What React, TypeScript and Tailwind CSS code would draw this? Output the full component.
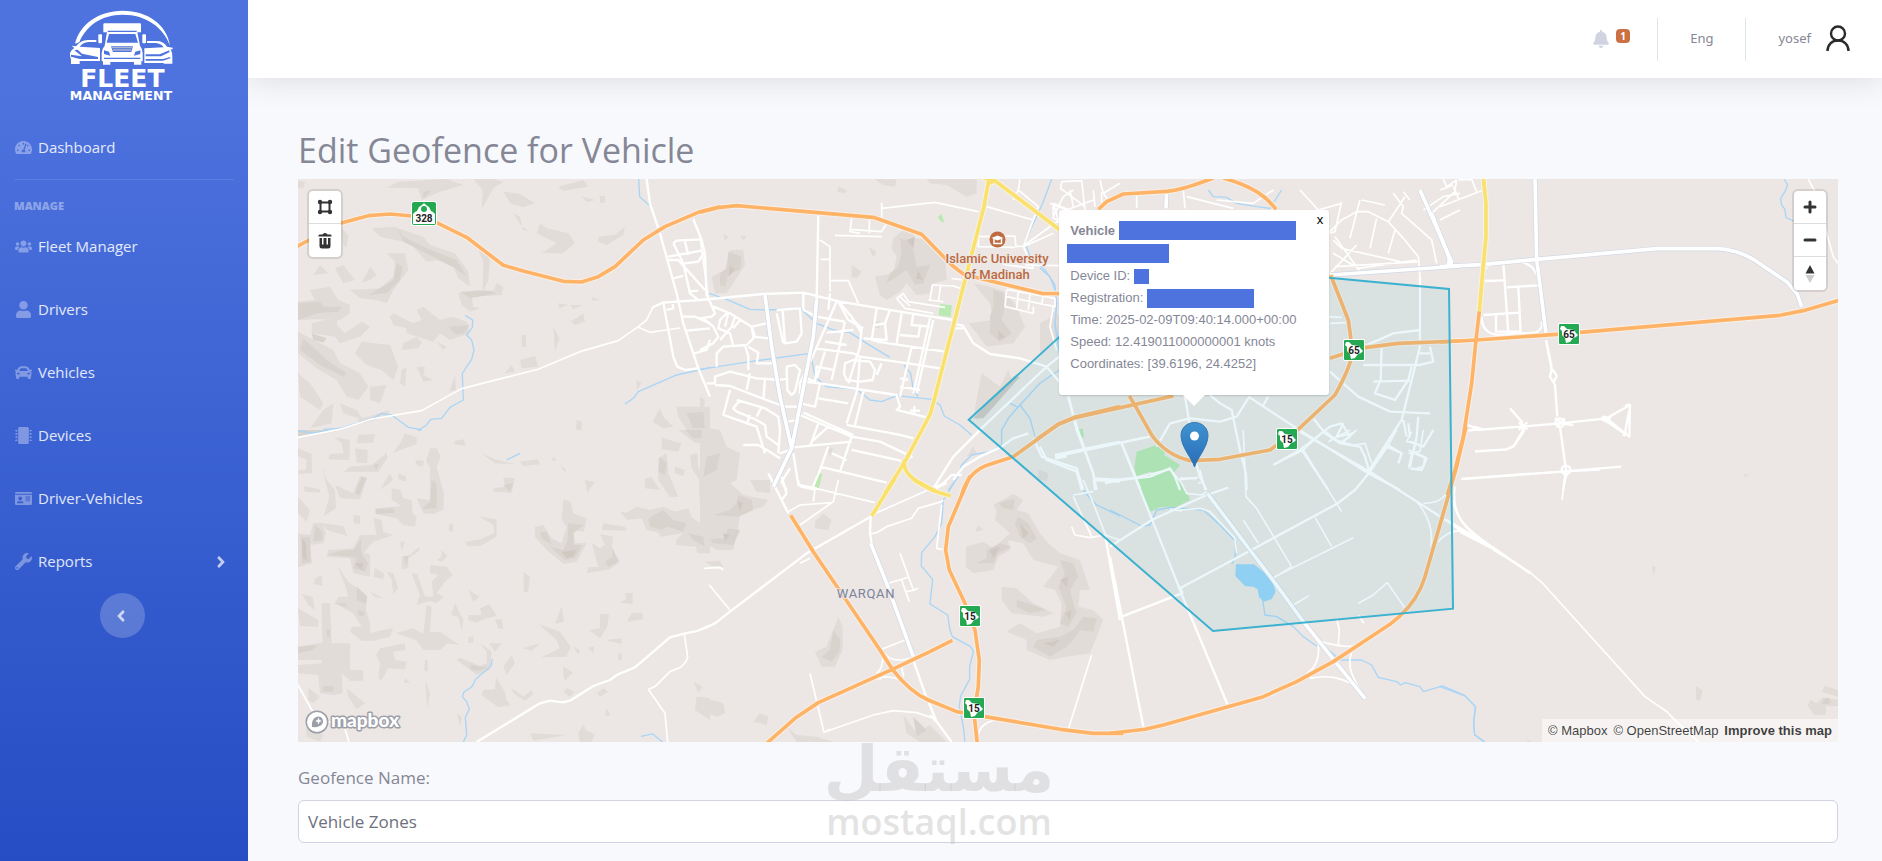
import React from "react";
import {
  FaTachometerAlt,
  FaUsers,
  FaUser,
  FaCar,
  FaMicrochip,
  FaIdCard,
  FaWrench,
  FaAngleRight,
  FaAngleLeft,
  FaBell,
} from "react-icons/fa";

type Tile = {
  x: number;
  y: number;
  hill?: string;
  hillMid?: string;
  hillDark?: string;
  park?: string;
  lake?: string;
  stream?: string;
  thin?: string;
  mid?: string;
  wide?: string;
  orange?: string;
  yellow?: string;
};

// Vector map data. Each tile has its own origin and is drawn at a third of its units.
const tiles: Tile[] = [
  {
    x: 290,
    y: 120,
    hill:
      "M24 182L45 185L40 205L24 205Z M325 185L470 177L520 195L450 215L395 240L385 205L290 203Z M550 178L610 177L640 185L610 205L575 268L578 210Z M640 215L690 222L735 250L700 262L660 250Z M668 278L690 290L700 330L715 333L695 318Z M750 310L770 325L835 340L855 368L820 400L755 400L800 370L740 340Z M805 200L880 180L895 200L820 212Z M875 228L915 240L890 247Z M930 228h15v20h-15Z M1005 320L1000 345L950 375L925 365L925 350L975 345Z M245 325L310 320L400 350L420 375L495 400L535 455L540 500L505 475L490 440L440 420L410 425L360 370L270 350Z M555 365L590 390L600 420L595 480L578 520L580 425Z M155 325L175 345L170 380L160 375Z M290 400L345 400L355 450L310 510L290 550L260 540L210 535L180 510L270 505L310 470L315 425Z M90 435L115 460L70 465Z M135 445L160 435L195 480L160 490Z M240 440L260 465L240 480L215 488Z M60 510L120 500L145 540L180 555L180 580L150 600L80 598L24 600L24 545L75 540Z M505 520L560 510L610 512L620 490L640 500L635 525L545 530L550 560L570 565L540 575L515 555Z M300 590L310 580L370 610L395 600L380 570L400 560L450 600L490 590L530 605L540 640L480 660L450 640L430 665L350 640L350 625L310 615Z M65 610L145 590L140 615L165 640L215 605L240 620L210 650L150 670L135 650L65 640Z M24 635L130 690L150 730L210 760L235 800L205 840L170 830L140 780L80 745L24 700Z M215 665L300 675L325 740L310 780L275 750L230 735L195 700Z M380 650L395 665L385 685L335 690L340 670Z M440 665L470 680L460 690Z M24 760L60 790L100 850L90 870L30 830Z M150 850L200 870L220 900L160 880Z M240 800L290 795L270 850L240 840Z M335 750L350 740L345 800L330 790Z M380 740L405 740L400 765L430 780L400 785Z M495 765L498 810L478 815Z M695 645h13v35h-13Z M790 620L808 655L795 695Z M805 550L835 555L808 565Z M840 555L880 555L850 568Z M905 530L930 540L908 543Z M880 580L885 605L855 615L842 605Z M735 708L745 740L695 745L690 720Z M665 735L675 755L645 760Z M1040 780L1055 790L1040 810Z M860 900L875 905V930H858Z M1160 860L1260 860V930H1190L1165 890Z M1110 865L1120 890L1150 920L1120 925L1088 905Z M100 870L130 850L125 910L60 925Z M200 900L300 870L290 890L220 910Z",
    hillMid:
      "M24 550L90 545L100 560L155 560L145 575L80 580L24 600Z M320 320L340 350L410 385L500 420L530 470L495 445L400 395L340 365Z M320 430L338 440L330 480L290 520L235 525L310 480Z M510 515L600 512L620 520L540 535Z M475 620L540 615L520 640L500 645Z M65 640L110 655L100 668L70 660Z M40 655L110 720L170 760L160 770L90 735L30 690Z M400 215L425 210L400 235Z M1190 880L1240 875L1245 925H1210Z",
    stream:
      "M1046 177L1049 230L1077 255M526 586L548 600L547 622L530 645L545 660L552 690L545 718L517 760L520 840L480 862L455 895L422 898L410 915L390 928L355 922L305 885L275 880L255 892L200 910L150 925L100 928M1005 852L1030 835L1045 815L1160 765L1260 743M690 1000L650 1020",
    thin:
      "M150 928L245 897L395 872L515 806L745 748L870 695L985 662L1045 620L1070 600L1090 560L1115 548L1170 545 M1045 622L1080 637L1170 624 M1085 565L1120 548",
    mid:
      "M1070 177L1080 250L1110 340L1160 520L1180 610L1225 745L1260 830 M1120 548L1150 710L1162 740L1185 750L1225 745 M1115 548L1260 538 M1135 410L1235 392 M1150 370L1160 362L1230 358 M1150 370L1180 430L1200 520L1225 540 M1210 297L1235 360L1245 400L1250 530 M1135 420L1165 420L1245 510 M1150 475L1180 468 M1185 365L1195 405 M1130 570L1150 565L1148 552 M1178 590L1215 590L1260 610 M1190 632L1260 625 M1213 700L1250 690L1260 660 M1185 430L1225 425L1245 395 M1195 515L1225 512",
    orange:
      "M0 390L24 378L156 308L235 287L300 282L365 288L440 308L530 352L640 436L700 453L820 484L875 486L925 470L975 440L1060 360L1125 320L1230 275L1290 260",
  },
  {
    x: 700,
    y: 170,
    hill:
      "M525 28L590 28L585 50L550 45Z M415 50L440 60L435 70L412 65Z M680 28L830 28L830 70L800 80L740 45L690 40Z M70 192L85 200L75 212Z M120 195L140 200L130 212Z M90 240L130 240L135 285L100 340L80 370L45 370L35 320L75 300Z M580 205L620 170L645 180L640 205L695 210L735 260L740 330L700 340L690 370L650 375L620 340L600 365L560 390L540 375L525 320L580 310L590 260L575 235Z M505 230L530 245L520 262Z M455 285L485 305L470 325L455 320Z M515 455L540 455L538 475L522 472Z M820 340L870 350L915 365L950 410L975 470L940 520L860 530L830 490L805 460L880 450L870 400Z M1055 420L1078 440L1078 500L1040 540L1040 490Z M845 610L900 650L925 600L940 640L820 740Z M0 770L60 780L80 830L120 850L110 930L50 960H0Z M0 680L15 690L10 730L0 730Z M380 830L400 835L390 860Z M820 830L830 850L800 860Z M1015 900L1045 910L1040 935L1015 925Z",
    hillMid:
      "M85 245L125 260L120 300L85 310L75 350L60 345L60 310L80 295Z M600 205L630 215L640 240L650 290L690 285L670 340L645 345L620 300L590 320L560 340L570 310L595 290L605 250Z M880 360L910 370L915 410L905 450L935 490L900 515L870 490L870 440L880 410Z M845 710L940 620L960 610L870 720L830 750Z M20 860L60 850L50 900L10 920Z",
    hillDark: "M620 210L645 200L640 235Z M655 300L668 330L648 325Z M90 285L105 300L85 320Z M895 480L915 500L895 510Z M920 640L945 620L960 620L850 745L820 745Z",
    park: "M714 140L725 132L733 158L720 152Z M720 402L756 406L752 441L716 436Z M350 908L367 912L356 955L343 950Z M1135 780L1148 778L1152 800L1138 804Z",
    stream:
      "M27 370L80 388L150 418L200 420L300 415L350 460L400 480L450 488L500 520L570 562M0 598L150 575L330 550 M332 552L345 620L380 650L470 658L510 690L545 695L590 677L695 688L720 705L733 738L780 765L815 795 M612 585L632 610L640 660L655 680 M1055 28L1030 95L975 215L990 260L1035 300L1065 345L1070 400L1065 470L1078 550 M1078 600L1020 640L960 705L925 745L905 780L905 825L870 845L815 855L785 885L775 920L745 960 M960 705L990 745L1005 800 M930 700L955 712",
    thin:
      "M545 98L545 145 M545 115L705 97L835 125 M405 196L545 200 M455 145L450 185L480 190 M508 145L508 190 M560 160L545 185L450 178 M860 110L1000 150 M360 210L390 230L390 365 M362 268L390 268 M392 332L445 332L475 400 M0 200L25 385 M590 385L610 370L625 395L735 412 M590 385L615 415L700 430 M600 380L630 408 M690 390L697 345L760 348L780 355 M685 390L730 395 M722 348L715 395 M755 325L790 330 M835 200L945 198L948 230L970 228 M835 190L835 230L945 232 M970 230L1000 295L920 285L880 270 M970 228L1078 150 M865 25L1078 20 M960 28L955 60L1015 110 M955 60L940 90 M1015 110L970 230L1060 190 M1085 35L1082 55L1155 110 M1060 100L1078 160 M1060 100L1130 130 M1145 30L1155 120 M1085 35L1145 32 M1200 30L1210 70L1260 40 M1210 70L1225 90 M975 285L1078 287 M920 360L915 410L1000 430L1000 410 M920 380L1065 410L1065 385L920 358 M955 365L950 415 M990 370L985 420 M1030 375L1025 405 M1060 410L1050 470L1070 540",
    mid:
      "M760 460L790 468L820 520L870 552L960 565L1040 590L1078 635 M700 955L760 860L850 770L1040 590L1078 560 M765 475L790 475 M0 390L190 372L310 368L420 395L600 425L760 450 M355 130L350 390 M390 370L385 420 M25 385L45 430L35 440L0 445 M0 540L40 520L55 500L40 470L10 445 M40 410L90 430L155 470L200 460 M155 470L165 500L140 525L70 530L50 550L50 590 M80 430L60 450L55 475L90 490L100 530 M105 440L95 470L60 510 M120 450L100 475 M85 430L75 470 M155 470L160 500L205 505 M135 525L145 560L145 600 M145 530L175 548L170 580L230 580 M230 420L300 415L305 490L290 515L255 520L248 420 M310 370L310 420L350 440 M230 430L250 520 M20 640L45 640L45 620L90 605L170 625L240 630 M45 645L90 648L240 705 M150 610L140 660 M195 625L190 690 M90 660L70 735L170 770L195 850 M110 690L195 715L235 740L240 780L235 850 M120 690L100 715L110 725L160 745L195 765L200 800L235 825 M185 710L170 740 M150 735L140 765 M260 590L285 585L300 600L285 665L275 675L262 660Z M240 710L300 710 M240 630L265 625 M265 755L300 748 M310 635L360 640L590 675L600 710L590 720L680 742 M410 395L320 600L300 640L300 720 M415 395L445 450L490 475 M420 400L455 440L485 490 M350 440L405 450L435 455 M380 488L460 480 M375 515L440 525 M345 535L460 550L480 560L625 580L720 595 M375 545L350 625 M435 455L395 630 M455 445L485 475L480 530L445 640 M480 560L472 660L440 760 M530 415L515 510L545 515 M570 420L555 460L525 465 M555 460L560 510L490 505 M605 430L590 520 M640 430L635 465L690 470 M660 470L655 500L600 495 M690 445L640 670 M530 515L735 545 M635 530L600 680 M700 450L650 670 M545 580L530 615 M435 580L460 570L510 575L525 600L518 630L480 635L440 630L432 610Z M320 625L345 635L350 590L400 600 M360 640L345 710L300 700 M355 685L445 700 M600 650L660 660 M300 735L455 800L540 815L635 860L615 870 M310 728L460 795 M455 800L420 905 M465 765L490 665 M440 765L600 795L640 805 M280 832L455 815 M455 840L615 875 M395 850L440 870 M385 770L335 815 M355 760L330 830 M385 830L360 900L335 960 M360 890L560 938 M280 850L295 945L350 955 M270 895L245 935L260 960 M240 850L270 840 M600 625L625 630 M130 825L175 825L240 865 M1105 680L1130 770L1180 910L1190 960 M1000 805L1025 860L1130 895L1150 960 M1065 855L1260 815 M1065 860L1090 860 M1180 930L1260 935 M1215 940L1260 930 M630 722L660 722M643 708L643 735 M785 915L755 915L730 940L700 958 M985 790L940 805L905 830L840 860L790 890L760 930",
    wide: "M195 375L215 530L240 680L275 835L220 950 M350 390L340 500L275 835",
    orange:
      "M0 127L60 112L110 107L520 142L665 193L755 285L790 312L850 328L1025 370L1100 371 M785 975C800 920 830 895 870 883L940 860L1075 763L1125 742L1260 710",
    yellow: "M868 20L852 110L700 700L690 735L612 880L555 970 M612 870C612 910 630 925 690 955L705 962 M845 22L885 32L1085 184 M868 40L885 32",
  },
  {
    x: 1040,
    y: 190,
    hill: "M0 400L45 375L55 440L0 490Z M0 840L20 850L20 870L0 870Z",
    park: "M290 785L350 765L375 782L372 795L420 825L400 850L385 835L350 850L330 845L290 858L283 835Z M290 862L335 848L385 838L405 855L450 925L330 960Z M113 718L128 716L132 742L116 744Z",
    stream:
      "M505 0L520 20L560 22L590 40L650 50L690 55L725 0 M0 235L30 260L45 300L50 340L45 400L60 470",
    thin:
      "M780 0L835 60L905 40 M870 130L885 125L905 35 M870 125L905 90L950 65L985 65L1045 95L1090 145L1135 200L1140 260 M1045 95L1095 20 M965 30L1035 45 M960 30L930 145 M885 140L960 245 M950 165L885 235L870 250 M880 190L955 235L1130 210 M885 230L1140 215 M880 150L905 175L1080 215 M1010 85L990 175 M1065 120L1045 190 M1060 10L1090 50L1085 70L1175 150L1190 220 M1090 5L1110 30 M1150 60L1210 20L1260 10 M1175 70L1245 5 M1200 90L1260 60 M30 40L80 60L160 30 M40 45L40 85L80 100 M90 0L100 50 M160 0L165 50 M185 5L185 45 M430 0L435 55 M100 0L70 20L40 80 M290 15L290 55 M440 20L580 55 M530 30L640 40L700 0 M860 380L905 382 M870 400L920 398",
    mid:
      "M85 620L110 720L160 850L165 900 M435 620L450 710L460 790L480 860L500 900 M350 770L390 700L450 685L540 695L590 680L625 625 M510 615L540 640L575 660L600 780L618 850L620 900 M625 620L770 715L985 850L1080 900 M685 620L670 645 M45 800L330 740 M45 805L80 800 M245 760L300 895 M0 770L20 810L110 845L125 900 M165 865L240 870L330 860L390 835L405 860L420 900 M420 865L470 865 M700 825L780 780L825 745L870 710L905 700L930 740L900 760 M785 780L865 900 M820 685L855 730L900 760L960 770L975 800L990 850 M985 845L1085 690L1140 470L1140 260 M870 545L955 620L1050 665L1170 670 M970 470L1060 430L1140 420 M970 525L1140 525L1180 515L1170 470 M1025 470L1022 570L1005 610L1065 630L1105 570L1115 530 M1000 575L1110 572 M1090 690L1100 740 M1105 700L1110 740 M1135 680L1130 740L1110 830 M1040 770L1085 790L1075 820 M1110 755L1150 770L1180 720 M1125 790L1160 805L1145 840L1110 835 M1135 490L1170 490 M910 700L890 740L940 730",
    wide: "M1140 0L1235 215L1230 230 M870 255L1260 228 M380 0L378 55",
    orange:
      "M-10 748L55 703L105 683L400 618 M268 618L290 655L335 735C360 770 400 800 450 812L540 808L690 780L775 718L885 615C910 570 930 530 938 490L932 440L925 390L872 255 M870 505L910 492L975 473L1075 460L1260 453 M175 58L200 35L250 12L380 4C430 0 490 -25 520 -36 M550 -36C640 -10 680 20 708 58",
  },
  {
    x: 1440,
    y: 170,
    hill: "M915 912L928 914L912 922Z",
    stream: "M1033 28L1043 45L1035 65L1022 85L1025 105L1035 118L1038 143L1062 153",
    thin:
      "M1105 28L1125 65L1180 260L1194 280 M10 28L20 50L50 30 M40 50L55 85L45 60L50 30 M55 30L95 28L110 65 M0 110L130 60 M0 60L40 45",
    mid:
      "M318 510L335 600L330 620L345 645L352 740 M330 610L340 600L350 618L340 640 M318 510L335 590 M110 780L240 770L360 760L500 745L570 705L568 800L500 755 M500 745L555 790L568 720 M210 715L245 755L250 780L220 830L200 838L105 845 M85 782L110 778L85 765 M100 770L130 778 M345 745L375 765M350 770L375 745 M236 757L262 778M236 780L262 757 M360 770L378 900L370 960 M65 927L365 905L543 890 M360 760L400 765 M190 280L205 490 M235 350L242 490 M135 333L190 331 M200 352L295 346 M130 435L240 428 M125 440C125 480 150 492 175 495L285 488C305 480 308 470 305 455 M168 435L168 485L240 484 M245 276C280 285 292 310 295 330 M132 300C140 285 160 282 190 280 M490 740L510 745L500 755L485 748Z M555 708L570 702M550 798L560 785 M365 900a13 13 0 1 0 26 0a13 13 0 1 0 -26 0 M347 758a13 13 0 1 0 26 0a13 13 0 1 0 -26 0",
    wide: "M0 290L125 284L290 268L650 236L830 236C880 238 910 250 940 268L1040 335L1072 372L1085 410 M285 28L290 268L298 330L318 490 M-25 130L28 265L25 285",
    orange: "M0 516L110 510L350 493L1020 436L1090 422L1200 390 M118 424L108 510L95 640L70 800L45 900L22 975",
    yellow: "M130 22L138 100L138 200L130 285L118 424",
  },
  {
    x: 290,
    y: 430,
    hill:
      "M24 55L65 72L66 130L24 132L24 122L48 118L50 90L24 78Z M133 22L180 30L178 90L115 88L120 72L160 70L155 40Z M205 15L255 12L250 38L200 40Z M195 55L233 60L232 100L200 98Z M290 68L292 85L265 125L162 125L180 110L245 105Z M345 10L380 22L380 42L310 68L330 40Z M495 32L520 28L528 48L490 42Z M575 70L620 90L680 103L615 100Z M690 95L745 88L750 103L700 108Z M790 80L800 92L785 92Z M810 108L825 115L828 130Z M95 105L110 150L135 180L138 235L102 258L118 200Z M135 165L190 190L210 138L232 142L210 208L150 205Z M40 168L90 178L90 188L45 185Z M300 130L310 150L270 180Z M325 130L348 140L348 155L325 148Z M375 90L402 92L398 110L380 105Z M420 55H440L452 80L440 110L462 190L460 240L430 252L400 250L380 205L420 210V110L408 95Z M305 175L330 180L340 205L365 210L368 250L380 260L375 290L340 285L320 265L255 252L258 235L335 228L305 210Z M24 200L60 240L50 275L24 250Z M190 255L210 258L210 282L192 280Z M250 265L275 270L280 305L310 315L250 335L220 370L240 372V440L190 430L180 385L110 380L115 360L190 355L210 315L260 315Z M70 280L95 278L108 310L100 340L60 345L66 400L24 412L24 310L60 315Z M95 280L160 288L172 318L110 300Z M480 278L490 285L488 308L475 300Z M570 260L620 268V320L570 348H530L527 335L570 328L612 310L610 285Z M640 142L675 145L665 188L610 185L612 175L645 170Z M885 150L915 155L892 188Z M820 208L842 215L850 250L890 265L882 305L850 300L855 340L890 340L860 395L820 402L770 360L735 320V290L760 285L785 325L815 340L830 290L815 270Z M940 280L1005 290L1010 302L935 300Z M905 338L930 355L945 345L930 312L970 320L965 350L990 395L960 418L890 430L895 412L925 410Z M990 245L1010 248L1040 230L1080 240L1120 230L1155 245L1195 235L1205 262L1245 290L1260 300V370H1222L1218 350L1160 345L1158 330L1180 310L1110 320L1105 308L1070 300L1055 265L1012 270Z M1105 85L1130 70L1135 130L1165 200L1140 200L1105 150Z M1065 145L1085 142L1110 180L1065 175Z M1200 75L1222 70L1225 115L1260 130V280L1228 200V150L1205 115Z M1155 110L1185 120L1180 138L1155 130Z M1115 22L1130 28L1175 40L1165 65L1115 58Z M1165 0H1250V40L1215 38Z M700 425L720 440L715 485H702Z M1005 490H1028V522L990 518L1008 508Z M930 552H957L952 590L930 625L897 600L930 595Z M1025 550L1058 548V568L1012 575Z M815 528L822 575L795 582Z M745 582L810 605L842 650L830 680L755 682L810 655L800 630Z M700 655L750 640L725 662Z M850 650L870 660L865 675Z M895 655L912 648L912 670Z M985 670H995V690H985Z M945 630L995 625V642Z M535 480L568 500L550 515Z M495 520L520 570L515 600L505 560L483 555Z M598 522L620 558L580 568L560 578L535 570L535 555L575 555L570 535Z M615 568H635L640 598L625 595Z M535 620H550V638H535Z M598 640H635L615 665Z M570 640L605 665L600 720L560 735L500 690L510 683L570 708L590 700V665Z M665 675L675 700L650 735L640 710Z M618 742L645 785L650 810L663 825L625 832L575 795L580 780L615 778Z M665 775L700 800L725 780L728 795L705 812L670 790Z M820 708L848 728L825 752L820 735Z M420 405L470 410L488 435L465 455L440 490L462 500L440 520L420 512L380 525L390 495L365 430L382 432L405 500L430 500L425 455L445 435L420 430Z M455 360L472 378L455 395L440 390L455 380Z M385 352L390 360L355 385V415L335 418V380L360 375Z M330 335H345L335 362Z M140 405L175 455L230 495L228 540L240 580V610L278 600L310 595L300 620L250 632H215L180 605L185 590L215 590L190 550L135 520L145 500L175 500L165 465Z M255 415L282 430L280 448L250 440Z M290 425L310 430L325 475L310 492L305 450Z M75 445L95 435L98 468L72 462Z M240 485L280 505L255 502Z M35 492L68 500L75 540L55 525Z M24 535L85 570L85 590L30 588Z M95 520L120 520L125 640H180V720L220 720V752L180 752L155 730L158 790L130 795L90 790L85 735L24 730V705L95 700V690H24V650L85 640H97Z M318 610L370 595L395 610L450 605L508 645L470 640L452 660H400L378 630L350 620Z M410 525L425 530L420 610L400 612Z M270 655L345 640V660L310 665L315 690L350 695L345 718L295 715L275 750L265 745L270 700L258 675Z M405 690L413 690V725L403 722Z M405 750L420 790L412 835Z M345 745L360 758L342 758Z M170 775L225 820L200 838L175 800Z M55 775L90 800L70 820L55 810Z M722 910L830 915L800 920L730 932Z M880 882L888 900L915 915L905 935H870L865 910Z M950 835L962 855L945 858Z M1210 755L1238 770L1225 788Z M1220 800L1260 805V870L1215 840Z M940 775L955 785L930 800L922 790Z M830 775L855 785L840 800L820 785Z M500 850L515 860L512 890Z M48 895L100 915L90 935L50 920Z",
    hillMid:
      "M215 140L230 145L208 195L195 190Z M425 150L440 160V235L395 238L420 215Z M255 238L310 235L315 248L260 252Z M215 325L212 360L220 380L235 400L225 425L190 415L200 385L185 380L112 375L150 362L190 360Z M75 285L98 305L98 330L70 335Z M35 320L60 320L62 395L35 400Z M640 165L670 160L660 186Z M835 280L880 285L850 310L852 345L878 345L855 385L825 390L780 350L820 360L833 330Z M750 305L770 305L785 345L755 325Z M965 350L985 395L955 412L945 395L968 380Z M1120 240L1150 270L1190 280L1180 305L1150 295L1130 290L1115 300L1080 290L1075 265Z M1110 80L1130 100L1125 135L1105 125Z M1195 310L1240 320L1245 350L1210 330Z M1185 0H1235V25L1210 25Z M200 470L232 500L228 522L200 510Z M205 540L222 545V560L205 555Z M110 600h10v20h-10Z M100 768H130V785H100Z M540 705L590 712L570 722L545 720Z M130 520L170 520L165 530Z M24 650L80 645L70 660L24 670Z M340 380L355 378L350 405Z M250 105L268 100L258 120Z M24 0H160L90 12L24 20Z",
    hillDark: "M815 365L860 360L850 380L830 385Z M195 400L220 400L215 420Z M35 325L48 340L50 390L38 385Z",
    stream: "M24 3L70 9L130 0 M607 687L603 708L557 748L546 770L522 786L517 800L530 815L538 838L526 862L530 915L520 936 M1053 919L1088 912L1118 936 M383 0L395 0",
    thin: "M24 765L65 840L105 875L160 880L177 936 M24 22L150 -2 M1075 778L1125 850L1133 936 M1183 612L1193 680L1188 695L1172 712L1140 725L1095 770L1075 778",
    mid: "M560 936L750 820L780 812L818 817L840 812L910 768L960 750L980 735L1035 712L1140 622L1180 612L1222 603L1260 587",
  },
  {
    x: 700,
    y: 480,
    hill:
      "M0 0L80 0L130 45L205 60L190 80L120 100L115 140L100 210H50L0 180Z M150 0H210V40L170 35Z M370 100L395 120L385 150L345 145L345 125Z M15 245L60 243L70 262L30 255Z M415 410L428 440V510L405 560H365L345 515L380 500Z M0 650L70 670L75 700L50 710L0 690Z M180 700L205 710L200 735L160 725Z M260 740L290 765L350 770L400 786H290Z M610 705L650 760L690 735L740 786L660 786L620 760Z M940 42L970 60L950 90L985 100L1020 160L1045 190L1080 220L1140 240L1170 330H1140L1135 380L1180 390L1210 420L1190 470L1170 520L1100 530L1050 540L980 510V480L920 455L960 430L1010 460L1080 440L1085 370L1065 330L1030 320L1075 260L1000 240L970 190L925 180L930 210L895 230L880 270L820 280L798 260V200L850 185L880 205L930 160L885 120L890 90L880 75Z M905 320L950 325L1000 370L1060 400L1030 410L935 400L905 360Z M835 135L850 150L825 155Z",
    hillMid:
      "M115 45L155 60L160 90L115 110L40 105L90 90L110 70Z M85 145L120 150L100 195L40 190L30 178L75 175Z M400 450L422 480L418 515L395 545L365 530L390 510Z M895 70L945 55L940 90L910 85Z M955 110L985 130L1010 175L990 190L960 170L945 130Z M860 210L900 190L935 200L895 220L880 250L830 250L860 235Z M1080 240L1120 250L1135 290L1110 330L1120 370L1130 400L1105 440L1080 430L1100 380L1075 320L1095 280Z M950 360L1000 375L1040 390L990 400L950 380Z M1150 410L1190 415L1180 455L1140 450L1120 480L1100 500L1050 530L1000 500L1010 480L1080 470L1120 450Z M640 710L680 750L650 770Z",
    hillDark: "M110 60L128 70L120 95Z M70 160L90 165L75 182Z M960 130L985 160L970 175Z M870 210L900 200L880 235Z M1080 300L1105 290L1100 320Z M1095 400L1115 390L1110 420Z M1030 490L1080 480L1060 500Z",
    park: "M348 0H362L354 24L343 20Z",
    stream:
      "M768 0L730 60L725 130L705 170L665 218L664 258L698 298L690 372L743 405L750 450L757 470L812 500L820 515L809 560V598L782 648L778 680L790 740L795 786 M1140 0L1150 30L1175 60L1190 75L1260 108",
    thin:
      "M330 580L372 757L520 705L580 692L650 698L700 715 M372 757L390 748 M28 315L90 390 M600 220L640 330L655 325 M565 310L625 292 M605 300L628 365 M618 335L645 330 M265 95L300 75L395 68 M300 135L400 65L415 0 M510 162L530 158L560 140L635 115L655 85L725 65L730 60 M515 105L730 10 M545 508L615 480 M548 520C550 550 545 570 530 580 M520 590C560 590 590 590 605 605 M610 545C605 560 605 575 612 590 M555 520C565 540 600 545 630 535 M545 595L490 600 M835 786C830 750 850 730 880 722 M1175 525L1105 748 M12 265L60 262L70 270 M295 0L298 18L360 28L525 68 M300 20L345 30L340 65 M300 250L330 235 M725 75L710 205L735 210 M700 30L740 10 M1115 140L1125 165L1170 173L1215 165L1260 180 M1120 50L1175 170 M1120 45L1180 35 M1150 0L1180 70L1215 160",
    mid:
      "M205 -20L265 100 M0 450L45 430L90 395L320 220L512 110L510 160L515 190L560 310L615 470L675 640L710 725L755 786 M710 725L690 705 M1215 160L1230 250L1260 420 M245 -10L260 40L245 60",
    wide: "M512 190L560 310L640 530",
    orange:
      "M272 106L340 215L540 510L577 568C610 610 650 645 685 660L770 695L800 700L855 710L1080 748L1180 760L1270 760 M200 790L285 715L355 668L577 568L690 515L757 481 M810 -12L745 140L737 210L748 270L795 370L825 450L838 540L835 620L822 700L832 790",
    yellow: "M585 -5L515 108 M640 0L700 32L752 48",
  },
  {
    x: 1110,
    y: 430,
    lake: "M378 403H432L460 425L485 445L497 485L485 507L462 515L447 502L443 478L430 470L405 468L376 438Z",
    park: "M80 142L120 133L180 120L200 142L240 210L200 230L150 232L120 245L100 195Z",
    stream:
      "M0 240L95 288L120 285L140 240L185 232L280 240L330 285L378 335L375 385L365 402 M458 510L465 555L500 560L550 590L580 620L615 645L650 655L690 690L755 690L785 705L805 742L860 755L873 765L885 758L930 770L940 785L998 768L1065 797L1096 830L1091 878L1094 914L1125 936",
    thin:
      "M400 0L408 200L440 235L545 410 M400 270L445 340 M615 262L665 350 M485 445L730 323 M545 410L490 445 M745 520L790 495L832 458L885 535 M550 525L597 497 M210 240L270 235L300 245L375 325L380 370 M180 238L215 243 M580 60L695 245 M495 103L580 60L630 15 M680 565L688 600L685 645 M745 555L762 580 M620 630C680 650 730 655 750 640 M625 640C630 690 615 715 590 730 M600 745C650 735 690 740 735 768 M725 665C710 710 725 740 765 805 M0 150L80 142L180 118L215 160L230 190L275 195L290 185 M205 150L265 142 M265 160L280 155 M860 0L835 45L775 125 M835 45L875 70L865 100 M905 5L890 35L920 40 M940 0L930 65L895 70 M895 60L945 80L940 110L920 115 M905 70L895 115 M640 0L680 30L730 45L765 40L785 100 M655 35L720 0 M700 35L740 0 M1035 170C1025 250 1060 290 1100 320 M940 220C990 220 1005 200 1015 180 M920 215C960 260 970 310 962 350 M985 335C1000 315 1030 300 1050 303 M270 120L285 180 M1055 147L1260 130 M1095 63L1190 58L1215 45L1245 0 M0 45L100 22",
    mid:
      "M35 40L230 530L352 822 M0 350L125 270L290 195L355 173 M35 560L215 490 M210 475L420 362L680 222L735 180L780 125L835 45 M570 5L780 125L1015 275 M0 380L100 890 M1015 275L1050 300L1160 360L1260 430 M210 470L218 492",
    wide: "M292 190L420 360L485 445L580 575L680 700L765 805",
    orange:
      "M1068 -10L1040 110L1010 215L945 440C930 490 900 530 870 558L840 583L670 695L560 755L455 802L160 885L105 898L0 910",
  },
  {
    x: 1440,
    y: 470,
    hill: "M768 648L789 662L780 692L768 688Z M635 288L648 290L641 315Z M1155 648L1194 660V680L1145 665Z M1110 688L1130 700L1150 682L1194 690V708H1158V734H1122L1104 708Z M262 810L272 812V816H262Z",
    hillMid: "M1150 690L1165 682L1174 700L1145 704Z",
    stream: "M0 650L75 678L107 710L101 755L104 795L135 818",
    thin:
      "M365 0L375 20L366 90 M390 0C378 15 374 30 366 90 M65 27L365 5L480 0 M160 240L265 303L310 342L615 680L682 726L700 746L776 816",
    mid: "M20 150L170 240 M60 185L170 242 M40 90C50 150 80 180 170 240",
  },
];

type LayerKey = Exclude<keyof Tile, "x" | "y">;

function Layer({ name, ...rest }: { name: LayerKey } & React.SVGProps<SVGPathElement>) {
  return (
    <g>
      {tiles.map((t) =>
        t[name] ? (
          <path
            key={`${t.x}-${t.y}`}
            d={t[name]}
            transform={`translate(${t.x} ${t.y}) scale(0.3333)`}
            strokeLinejoin="round"
            {...rest}
          />
        ) : null
      )}
    </g>
  );
}

function Shield({ x, y, label }: { x: number; y: number; label: string }) {
  return (
    <g transform={`translate(${x} ${y})`}>
      <rect x="-11" y="-11" width="22" height="22" rx="2" fill="#fff" />
      <rect x="-10" y="-10" width="20" height="20" rx="1" fill="#24a852" />
      <path d="M-8 -8L-5 -8L-2 -5L5 -4L7 -1L9 1L7 3L4 4L1 8L-3 9L-4 4L-7 1L-7 -3L-9 -5Z" fill="#fff" />
      <text y="4" textAnchor="middle" className="fill-[#222] text-[10px] font-bold [font-family:Roboto,sans-serif]">
        {label}
      </text>
    </g>
  );
}

function MapCanvas() {
  return (
    <svg
      viewBox="298 179 1540 563"
      preserveAspectRatio="xMidYMid slice"
      className="block h-full w-full"
      fill="none"
      aria-label="Map"
    >
      <rect x="298" y="179" width="1540" height="563" fill="#ece7e4" />
      <Layer name="hill" fill="#e1dcd8" />
      <Layer name="hillMid" fill="#d9d3ce" />
      <Layer name="hillDark" fill="#cfc9c2" />
      <Layer name="park" fill="#bae9b1" />
      <Layer name="lake" fill="#9ad4f6" />
      <Layer name="stream" stroke="#a9d5f6" strokeWidth={4} />
      <Layer name="thin" stroke="#fff" strokeWidth={5} />
      <Layer name="mid" stroke="#fff" strokeWidth={7} />
      <Layer name="wide" stroke="#cfd9e6" strokeWidth={15} />
      <Layer name="wide" stroke="#fff" strokeWidth={11} />
      <Layer name="orange" stroke="#f7f0ea" strokeWidth={17} />
      <Layer name="yellow" stroke="#f7f3e2" strokeWidth={17} />
      <Layer name="orange" stroke="#ffb366" strokeWidth={11} />
      <Layer name="yellow" stroke="#fae16e" strokeWidth={11} />

      <path
        d="M968.7 419.7L1143 260.5L1449 289L1453 608.7L1213 631Z"
        fill="#3bb2d0"
        fillOpacity="0.1"
        stroke="#3bb2d0"
        strokeWidth="2"
      />

      <g
        stroke="#ece7e4"
        strokeWidth="2"
        style={{ paintOrder: "stroke" }}
        className="fill-[#bb6a42] text-[13px] font-medium [font-family:Roboto,sans-serif]"
      >
        <text x="997" y="263" textAnchor="middle">Islamic University</text>
        <text x="997" y="279" textAnchor="middle">of Madinah</text>
      </g>
      <circle cx="997.500" cy="239.500" r="8" fill="#bf6b42" />
      <path d="M991.500 238L997.500 235.500L1003.500 238L997.500 240.500Z" fill="#fff" />
      <path d="M994 239V243.500H1001.500V239" stroke="#fff" strokeWidth="1.500" />

      <text
        x="866"
        y="598"
        textAnchor="middle"
        stroke="#ece7e4"
        strokeWidth="2"
        style={{ paintOrder: "stroke" }}
        className="fill-[#7b829b] text-[13px] tracking-wider [font-family:Roboto,sans-serif]"
      >
        WARQAN
      </text>

      <g transform="translate(411 201)">
        <rect width="26" height="25" rx="3" fill="#fff" />
        <rect x="1" y="1" width="24" height="23" rx="2" fill="#24a852" />
        <path d="M2 23V13L4 11L6 10L8 6L11 4L13 2L15 4L18 6L20 10L22 11L24 13V23Z" fill="#fff" />
        <circle cx="13" cy="8" r="3" fill="#24a852" />
        <text x="13" y="21" textAnchor="middle" className="fill-[#222] text-[10px] font-bold [font-family:Roboto,sans-serif]">
          328
        </text>
      </g>
      <Shield x={1354} y={350} label="65" />
      <Shield x={1569} y={334} label="65" />
      <Shield x={1287} y={439} label="15" />
      <Shield x={970} y={616} label="15" />
      <Shield x={974} y={708} label="15" />

      <defs>
        <linearGradient id="pin" x1="0" y1="0" x2="0" y2="1">
          <stop offset="0" stopColor="#3f93d0" />
          <stop offset="1" stopColor="#2a6cb8" />
        </linearGradient>
      </defs>
      <path
        d="M1194.500 467C1192 458 1181 447 1181 435.500C1181 428 1187 422.500 1194.500 422.500S1208 428 1208 435.500C1208 447 1197 458 1194.500 467Z"
        fill="url(#pin)"
        stroke="#2f78b4"
        strokeWidth="1"
      />
      <circle cx="1194.500" cy="436" r="4.500" fill="#fff" />
    </svg>
  );
}

function MapboxLogo() {
  return (
    <svg width="104" height="26" viewBox="0 0 104 26" className="absolute bottom-[7px] left-[7px]">
      <circle cx="12" cy="13" r="11.500" fill="#9c9ea8" />
      <circle cx="12" cy="13" r="10" fill="#fff" />
      <path d="M7 18C6.500 13 8 8 13 7.500C17 7.500 19 11 17.500 14.500C15.500 18 11 18.500 7 18Z" fill="#9c9ea8" />
      <path d="M13.500 8.500L14.500 11L17 12L14.500 13L13.500 15.500L12.500 13L10 12L12.500 11Z" fill="#fff" />
      <text
        x="26"
        y="18"
        fill="#fff"
        stroke="#9c9ea8"
        strokeWidth="3"
        strokeLinejoin="round"
        style={{ paintOrder: "stroke" }}
        className="text-[19px] font-black [font-family:Lato,sans-serif]"
      >
        mapbox
      </text>
    </svg>
  );
}

function Redacted({ className }: { className: string }) {
  return <span className={`inline-block bg-[#4e73df] align-middle ${className}`} />;
}

function VehiclePopup() {
  return (
    <div className="absolute top-[31px] left-[58.2%] w-[270px] -translate-x-1/2 rounded-[3px] bg-white px-[11px] pt-[9px] pb-[20px] text-[13px] leading-[22px] text-[#858796] shadow-[0_1px_2px_rgba(0,0,0,0.15)] [font-family:'Liberation_Sans',Arial,sans-serif]">
      <button
        type="button"
        aria-label="Close popup"
        className="absolute top-px right-[6px] h-[18px] text-[13px] leading-[18px] text-black"
      >
        x
      </button>
      <div className="flex h-[23px] items-center gap-1">
        <strong>Vehicle</strong> <Redacted className="h-[19px] w-[177px]" />
      </div>
      <div className="-ml-[3px] flex h-[23px] items-center">
        <Redacted className="h-[19px] w-[102px]" />
      </div>
      <div className="flex h-[22px] items-center gap-1">
        Device ID: <Redacted className="h-[15px] w-[15px]" />
      </div>
      <div className="flex h-[22px] items-center gap-1">
        Registration: <Redacted className="h-[19px] w-[107px]" />
      </div>
      <div className="h-[22px]">Time: 2025-02-09T09:40:14.000+00:00</div>
      <div className="h-[22px]">Speed: 12.419011000000001 knots</div>
      <div className="h-[22px]">Coordinates: [39.6196, 24.4252]</div>
      <svg width="22" height="11" viewBox="0 0 22 11" className="absolute top-full left-1/2 -translate-x-1/2">
        <path d="M0 0H22L11 11Z" fill="#fff" />
      </svg>
    </div>
  );
}

const controlGroup =
  "absolute flex flex-col divide-y divide-[#ddd] overflow-hidden rounded bg-white shadow-[0_0_0_2px_rgba(0,0,0,0.1)]";
const controlButton = "flex h-[33px] w-8 items-center justify-center";

function MapControls() {
  return (
    <>
      <div className={`${controlGroup} top-3 left-[11px]`}>
        <button type="button" aria-label="Polygon tool" className={controlButton}>
          <svg width="16" height="16" viewBox="0 0 16 16" fill="none">
            <rect x="3.500" y="3.500" width="9" height="9" stroke="#333" strokeWidth="2" />
            <g fill="#333">
              <circle cx="3" cy="3" r="2.200" />
              <circle cx="13" cy="3" r="2.200" />
              <circle cx="3" cy="13" r="2.200" />
              <circle cx="13" cy="13" r="2.200" />
            </g>
          </svg>
        </button>
        <button type="button" aria-label="Delete" className={controlButton}>
          <svg width="16" height="18" viewBox="0 0 16 18" fill="#333">
            <path d="M1.500 4.500V3.500Q1.500 2.500 3 2.500H5.500Q6 1 8 1T10.500 2.500H13Q14.500 2.500 14.500 3.500V4.500Z" />
            <path d="M2.500 6H5V12.500H6.500V6H9.500V12.500H11V6H13.500V14Q13.500 16.500 11 16.500H5Q2.500 16.500 2.500 14Z" />
          </svg>
        </button>
      </div>
      <div className={`${controlGroup} top-3 right-3`}>
        <button type="button" aria-label="Zoom in" className={controlButton}>
          <svg width="14" height="14" viewBox="0 0 14 14" stroke="#333" strokeWidth="3" strokeLinecap="round">
            <path d="M7 2V12M2 7H12" />
          </svg>
        </button>
        <button type="button" aria-label="Zoom out" className={controlButton}>
          <svg width="14" height="14" viewBox="0 0 14 14" stroke="#333" strokeWidth="3" strokeLinecap="round">
            <path d="M2 7H12" />
          </svg>
        </button>
        <button type="button" aria-label="Reset bearing to north" className={controlButton}>
          <svg width="12" height="20" viewBox="0 0 12 20">
            <path d="M6 1L10.500 9.500H1.500Z" fill="#333" />
            <path d="M6 19L10.500 11H1.500Z" fill="#ccc" />
          </svg>
        </button>
      </div>
    </>
  );
}

function FleetLogo() {
  return (
    <svg width="110" height="94" viewBox="200 25 330 282" fill="none" aria-label="Fleet Management">
      <path d="M224 132C238 74 295 33 367 33C442 33 500 75 509 138C490 85 440 45 367 45C300 45 255 82 237 128Z" fill="#fff" />
      <g fill="#fff">
        <path d="M312 71H419Q422 71 422 75V98H409V93H322V98H309V75Q309 71 312 71Z" />
        <path
          fillRule="evenodd"
          d="M320 97H411L419 138Q427 148 427 160V185H423V195H401V187H330V195H308V185H304V160Q304 148 313 138ZM326 103L319 129H413L405 103ZM332 140L338 157H393L398 140ZM311 152V163L330 168L326 156ZM420 152L405 156L401 168L420 163ZM311 174V178H420V174Z"
        />
        <rect x="294" y="104" width="11" height="27" rx="3" />
        <rect x="426" y="104" width="11" height="27" rx="3" />
        <path
          fillRule="evenodd"
          d="M214 138L227 140Q240 122 262 121H288V127H264Q248 128 238 141L299 145V184H238V193H212V180Q208 170 209 160Q213 150 222 145ZM222 152L245 170L212 165V171L238 178H293V172L245 162L232 150Z"
        />
        <path
          fillRule="evenodd"
          d="M440 124H468Q490 124 500 141L517 144V149H511Q517 160 516 172V192H490V190H432V146L490 143Q482 131 466 130H440ZM436 164V170H482L507 158V152L478 164ZM436 178V183H488L510 176V172L488 178Z"
        />
      </g>
      <g stroke="#aab4cf" strokeWidth="4">
        <path d="M335 144H396M338 151H393" />
      </g>
      <g fill="#fff" textAnchor="middle" className="font-bold [font-family:'DejaVu_Sans',sans-serif]">
        <text x="366" y="262" className="text-[75px]">FLEET</text>
        <text x="362" y="300" className="text-[38px]">MANAGEMENT</text>
      </g>
    </svg>
  );
}

const navItems = [
  { label: "Fleet Manager", icon: FaUsers },
  { label: "Drivers", icon: FaUser },
  { label: "Vehicles", icon: FaCar },
  { label: "Devices", icon: FaMicrochip },
  { label: "Driver-Vehicles", icon: FaIdCard },
  { label: "Reports", icon: FaWrench, expandable: true },
];

function NavItem({ label, icon: Icon, expandable }: { label: string; icon: React.ComponentType<{ className?: string }>; expandable?: boolean }) {
  return (
    <a href="#" className="flex h-[63px] items-center px-[14px] text-[15px] text-white/85">
      <span className="flex w-[24px] items-center">
        <span className="flex w-[19px] justify-center">
          <Icon className="shrink-0 text-[17px] text-white/35" />
        </span>
      </span>
      {label}
      {expandable && <FaAngleRight className="mr-1 ml-auto text-[18px] text-white/70" />}
    </a>
  );
}

function Sidebar() {
  return (
    <nav className="relative z-20 flex w-[248px] shrink-0 flex-col bg-linear-to-b from-[#4e73df] from-10% to-[#264dc3] [font-family:'Open_Sans','Segoe_UI',sans-serif]">
      <div className="flex h-[115px] items-start justify-center pt-2 pr-1">
        <FleetLogo />
      </div>
      <hr className="mx-[14px] border-white/2" />
      <NavItem label="Dashboard" icon={FaTachometerAlt} />
      <hr className="mx-[14px] border-white/10" />
      <h2 className="px-[14px] pt-[17px] text-[11px] leading-[18px] font-extrabold text-white/40">MANAGE</h2>
      {navItems.map((item) => (
        <NavItem key={item.label} {...item} />
      ))}
      <button
        type="button"
        aria-label="Collapse sidebar"
        className="ml-[100px] flex h-[45px] w-[45px] items-center justify-center rounded-full bg-white/20 text-[18px] text-white/70"
      >
        <FaAngleLeft className="mr-1" />
      </button>
    </nav>
  );
}

function Topbar() {
  return (
    <header className="z-10 flex h-[78px] shrink-0 items-center justify-end bg-white pr-[32px] text-[13px] text-[#858796] shadow-[0_2px_31px_rgba(58,59,69,0.15)] [font-family:'Noto_Sans',sans-serif]">
      <button type="button" aria-label="Alerts" className="mr-[27px] flex items-start text-[#d1d3e2]">
        <FaBell className="mt-px text-[18px]" />
        <span className="mb-[6px] ml-[6px] flex h-[14px] w-[14px] items-center justify-center rounded bg-[#cc7044] text-[10px] font-bold text-white">
          1
        </span>
      </button>
      <span className="h-[43px] w-px bg-[#dde6ea]" />
      <a href="#" className="px-[32px]">Eng</a>
      <span className="h-[43px] w-px bg-[#dde6ea]" />
      <a href="#" className="flex items-center gap-[15px] pl-[32px]">
        yosef
        <svg width="24" height="28" viewBox="0 0 24 28" fill="none" stroke="#2b2b2b" strokeWidth="2.400">
          <circle cx="12" cy="8.500" r="7" />
          <path d="M1.500 26C1.500 19.500 6 15.500 12 15.500S22.500 19.500 22.500 26" />
        </svg>
      </a>
    </header>
  );
}

function Watermark() {
  return (
    <div
      aria-hidden="true"
      className="pointer-events-none absolute top-[559px] left-1/2 flex w-[224px] -translate-x-[241px] flex-col items-center text-[#c8c8c8]/50"
    >
      <span dir="rtl" className="text-[63px] leading-[64px] font-bold whitespace-nowrap [font-family:'DejaVu_Sans',sans-serif]">
        مستقل
      </span>
      <span className="text-[36px] leading-[40px] font-semibold whitespace-nowrap [font-family:'Open_Sans',sans-serif]">
        mostaql.com
      </span>
    </div>
  );
}

export default function App() {
  return (
    <div className="flex min-h-screen bg-[#f8f9fc]">
      <Sidebar />
      <div className="flex min-w-0 flex-1 flex-col">
        <Topbar />
        <main className="pt-[50px] pr-[44px] pb-[18px] pl-[50px] text-[#858796] [font-family:'Open_Sans','Segoe_UI',sans-serif]">
          <h1 className="mb-[7px] text-[34px] leading-[44px]">Edit Geofence for Vehicle</h1>
          <div className="relative">
            <div className="relative h-[563px] overflow-hidden">
              <MapCanvas />
              <MapControls />
              <VehiclePopup />
              <MapboxLogo />
              <div className="absolute right-0 bottom-0 flex gap-[6px] bg-white/50 px-[6px] text-[13px] leading-[23px] text-black/75 [font-family:'Liberation_Sans',Arial,sans-serif]">
                <a href="#">© Mapbox</a>
                <a href="#">© OpenStreetMap</a>
                <a href="#" className="font-bold">Improve this map</a>
              </div>
            </div>
            <label htmlFor="geofence-name" className="mt-[23px] block text-[17px] leading-[26px]">
              Geofence Name:
            </label>
            <input
              id="geofence-name"
              type="text"
              defaultValue="Vehicle Zones"
              className="mt-[9px] block h-[43px] w-full rounded-md border border-[#d1d3e2] bg-white px-[9px] text-[17px] text-[#6e707e] outline-none"
            />
            <Watermark />
          </div>
        </main>
      </div>
    </div>
  );
}
